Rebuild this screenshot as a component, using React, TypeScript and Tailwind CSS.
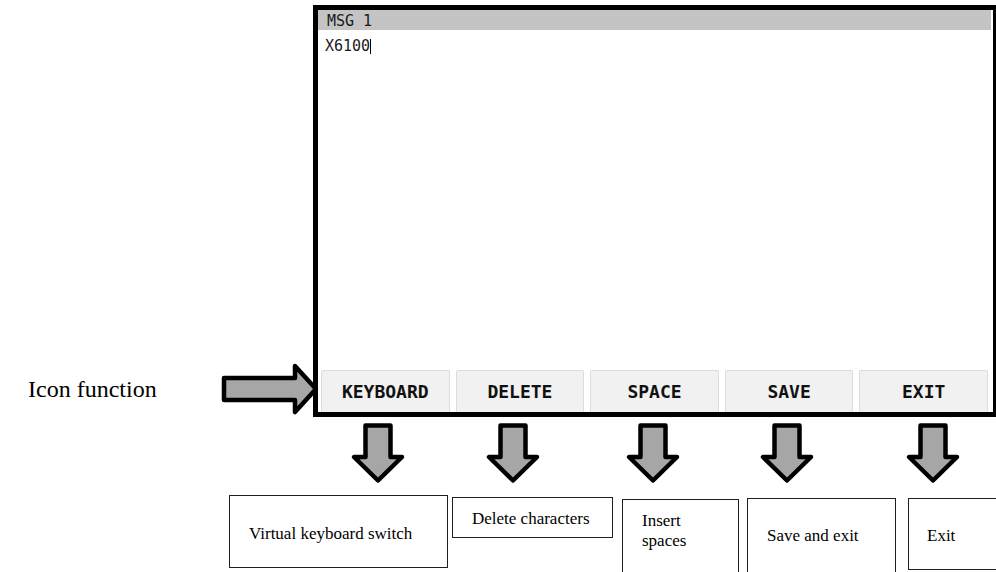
import React from 'react';

const mono = { fontFamily: '"DejaVu Sans Mono", "Liberation Mono", monospace' };

function RightArrow() {
  return (
    <svg width="100" height="54" viewBox="0 0 100 54" className="shrink-0 overflow-visible">
      <polygon
        points="6,16 77,16 77,4 98,27 77,50 77,38 6,38"
        fill="#a6a6a6"
        stroke="#000"
        strokeWidth="4.5"
        strokeLinejoin="round"
      />
    </svg>
  );
}

function DownArrow({ className }: { className: string }) {
  return (
    <svg width="60" height="66" viewBox="0 0 60 66" className={className}>
      <polygon
        points="17.5,5.5 42.5,5.5 42.5,37 54,37 30,60.5 6,37 17.5,37"
        fill="#a6a6a6"
        stroke="#000"
        strokeWidth="4.5"
        strokeLinejoin="round"
      />
    </svg>
  );
}

export default function App() {
  const buttons = ['KEYBOARD', 'DELETE', 'SPACE', 'SAVE', 'EXIT'];
  return (
    <div
      className="w-[996px] h-[572px] bg-white overflow-hidden"
      style={{ fontFamily: '"Liberation Serif", "Times New Roman", serif' }}
    >
      {/* top: label + screen */}
      <div className="flex pt-[5px]">
        <div className="w-[313px] shrink-0 flex items-end pb-[1px] relative z-0">
          <div className="w-[218px] shrink-0 pl-[28px] pb-[13px] text-[24px] leading-[28px] text-black whitespace-nowrap">
            Icon function
          </div>
          <RightArrow />
        </div>
        <div className="w-[685px] h-[412px] shrink-0 border-[5px] border-black bg-white flex flex-col relative z-10">
          <div
            className="h-[20px] mr-[2px] bg-[#c4c4c4] pl-[9px] pt-[2px] text-[15px] leading-[18px] text-[#1a1a1a]"
            style={mono}
          >
            MSG 1
          </div>
          <div
            className="pl-[7px] pt-[7px] text-[15px] leading-[18px] text-[#1a1a1a] flex items-center"
            style={mono}
          >
            <span>X6100</span>
            <span className="inline-block w-[1px] h-[15px] bg-black" />
          </div>
          <div className="flex-1" />
          <div className="grid grid-cols-5 gap-[6px] ml-[3px] mr-[5px] h-[42px]">
            {buttons.map((b) => (
              <div
                key={b}
                className="bg-[#f1f1f1] border-t border-l border-r border-[#dcdcdc] rounded-t-[2px] flex items-center justify-center text-[18px] font-bold text-[#111]"
                style={mono}
              >
                {b}
              </div>
            ))}
          </div>
        </div>
      </div>

      {/* down arrows */}
      <div className="flex mt-[3px] h-[66px]">
        <DownArrow className="shrink-0 ml-[348px]" />
        <DownArrow className="shrink-0 ml-[75px]" />
        <DownArrow className="shrink-0 ml-[80px]" />
        <DownArrow className="shrink-0 ml-[74px]" />
        <DownArrow className="shrink-0 ml-[86px]" />
      </div>

      {/* description boxes */}
      <div className="flex items-start text-[17px] text-black whitespace-nowrap">
        <div className="shrink-0 ml-[229px] mt-[9px] w-[219px] h-[73px] border-[1.5px] border-[#1f1f1f] pl-[19px] pt-[28px] leading-[19px]">
          Virtual keyboard switch
        </div>
        <div className="shrink-0 ml-[4px] mt-[11px] w-[161px] h-[41px] border-[1.5px] border-[#1f1f1f] pl-[19px] pt-[11px] leading-[19px]">
          Delete characters
        </div>
        <div className="shrink-0 ml-[9px] mt-[13px] w-[117px] h-[80px] border-[1.5px] border-[#1f1f1f] pl-[19px] pt-[11px] leading-[20px]">
          Insert
          <br />
          spaces
        </div>
        <div className="shrink-0 ml-[8px] mt-[12px] w-[149px] h-[80px] border-[1.5px] border-[#1f1f1f] pl-[19px] pt-[27px] leading-[19px]">
          Save and exit
        </div>
        <div className="shrink-0 ml-[12px] mt-[12px] w-[100px] h-[72px] border-[1.5px] border-[#1f1f1f] pl-[18px] pt-[27px] leading-[19px]">
          Exit
        </div>
      </div>
    </div>
  );
}
